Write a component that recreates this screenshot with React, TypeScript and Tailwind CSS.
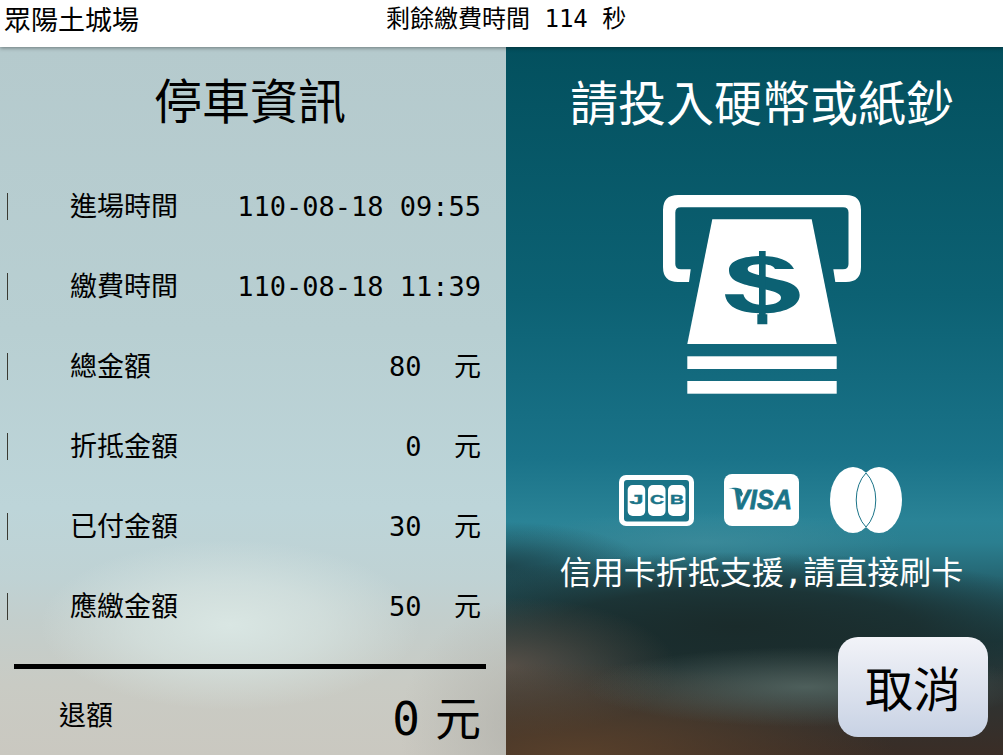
import React from "react";

const rows: [string, string][] = [
  ["進場時間", "110-08-18 09:55"],
  ["繳費時間", "110-08-18 11:39"],
  ["總金額", "80  元"],
  ["折抵金額", "0  元"],
  ["已付金額", "30  元"],
  ["應繳金額", "50  元"],
];

function PayIcon() {
  return (
    <svg width="200" height="200" viewBox="662 194 200 200" className="block">
      <path
        fill="#fff"
        fillRule="evenodd"
        d="M678 195H846Q861 195 861 210V267Q861 282 846 282H835.3L833.3 269.3H843Q848.5 269.3 848.5 264V212.5Q848.5 207.3 843 207.3H681Q675.3 207.3 675.3 212.5V264Q675.3 269.3 681 269.3H690.7L689 282H678Q663 282 663 267V210Q663 195 678 195Z"
      />
      <path fill="#fff" d="M712.3 219.3H811.7L836.7 344H687.3Z" />
      <rect x="687.3" y="356.3" width="149.4" height="12.7" fill="#fff" />
      <rect x="687.3" y="381" width="149.4" height="12.7" fill="#fff" />
      <g transform="translate(715 245) scale(0.3333)" fill="#0c6173">
        <path d="M237 72L180 72C175 62 160 58 140 58C115 58 98 62 98 72C98 82 115 86 140 92L190 104C230 112 254 125 254 150C254 185 205 205 145 205C80 205 35 190 30 148L85 148C90 170 115 180 145 180C175 180 198 172 198 158C198 146 180 140 155 134L110 124C70 114 42 105 42 75C42 47 85 33 140 33C185 33 225 45 237 72Z" />
        <path d="M132 18H152V208H157V238H127V208H132Z" />
      </g>
    </svg>
  );
}

function JcbLogo() {
  return (
    <svg width="75" height="51" viewBox="0 0 75 51" className="block">
      <rect x="0" y="0" width="75" height="51" rx="7" fill="#fff" />
      <rect x="5" y="5" width="65" height="41.500" rx="3" fill="#1b7488" />
      <rect x="8.700" y="10" width="17.500" height="31" rx="5" fill="#fff" />
      <rect x="29" y="10" width="17.500" height="31" rx="5" fill="#fff" />
      <rect x="49" y="10" width="17.500" height="31" rx="5" fill="#fff" />
      <g fill="#1b7488" stroke="#1b7488" strokeWidth="0.4" fontFamily="'Liberation Sans', sans-serif" fontWeight="700" fontSize="13">
        <text x="10.500" y="29" textLength="14" lengthAdjust="spacingAndGlyphs">J</text>
        <text x="31" y="29" textLength="14" lengthAdjust="spacingAndGlyphs">C</text>
        <text x="51" y="29" textLength="14" lengthAdjust="spacingAndGlyphs">B</text>
      </g>
    </svg>
  );
}

function VisaLogo() {
  return (
    <svg width="75" height="52" viewBox="0 0 75 52" className="block">
      <rect x="0" y="0" width="75" height="52" rx="8" fill="#fff" />
      <text
        x="9"
        y="34.700"
        fill="#1b7488"
        stroke="#1b7488"
        strokeWidth="0.8"
        fontFamily="'Liberation Sans', sans-serif"
        fontWeight="700"
        fontStyle="italic"
        fontSize="28"
        textLength="59"
        lengthAdjust="spacingAndGlyphs"
      >
        VISA
      </text>
      <path fill="#1b7488" d="M4.500 14.500C9 14 14 16 17 23L19 20L17 15C13 13.500 8 13.500 4.500 14.500Z" />
    </svg>
  );
}

function CardCircles() {
  return (
    <svg width="72" height="66" viewBox="830 467 72 66" className="block">
      <ellipse cx="853" cy="500" rx="23" ry="33" fill="#fff" />
      <ellipse cx="879" cy="500" rx="23" ry="33" fill="#fff" />
      <path
        fill="none"
        stroke="#1b7488"
        strokeWidth="1"
        d="M866 473A23 33 0 0 0 866 527A23 33 0 0 0 866 473Z"
      />
    </svg>
  );
}

export default function App() {
  return (
    <div className="w-[1003px] h-[755px] overflow-hidden flex flex-col font-['DejaVu_Sans_Mono','Noto_Sans_CJK_TC',monospace] text-black">
      <header className="h-[47px] shrink-0 bg-white relative z-10 flex items-center shadow-[0_1px_4px_rgba(0,0,0,0.4)]">
        <div className="w-[386px] pl-[4px] text-[27px] leading-[42px] mb-[5px]">眾陽土城場</div>
        <div className="text-[24px] leading-[38px] mb-[9px] whitespace-pre">剩餘繳費時間 114 秒</div>
      </header>
      <main className="flex flex-1 min-h-0">
        <section className="w-[506px] shrink-0 flex flex-col bg-[radial-gradient(ellipse_130px_130px_at_530px_680px,rgba(176,176,170,0.8)_0%,rgba(176,176,170,0)_100%),radial-gradient(ellipse_190px_85px_at_230px_578px,#d9e6e3_0%,rgba(217,230,227,0.6)_50%,rgba(217,230,227,0)_100%),linear-gradient(180deg,#b5cacd_0%,#b8cfd2_40%,#bdd5d9_65%,#bfd2d4_75%,#c3cecc_81%,#c9cbc4_90%,#cac8c0_100%)]">
          <h1 className="h-[119px] pb-[10px] pr-[6px] flex items-center justify-center text-[48px] font-normal">停車資訊</h1>
          <ul className="h-[480px]">
            {rows.map(([label, value]) => (
              <li key={label} className="h-[80px] flex items-center pl-[7px] pr-[25px] text-[27px] leading-[40px]">
                <span className="w-px h-[27px] bg-[#3a3a32]" />
                <span className="ml-[62px] mt-[2px]">{label}</span>
                <span className="ml-auto mt-[2px] whitespace-pre">{value}</span>
              </li>
            ))}
          </ul>
          <div className="mt-[18px] ml-[14px] mr-[20px] h-[5px] bg-black" />
          <div className="flex-1 flex items-center pl-[59px] pr-[25px]">
            <span className="text-[27px] leading-[40px] mt-[7px]">退額</span>
            <span className="ml-auto flex items-center text-[46px] leading-[60px] mt-[14px]">
              <span className="mr-[15px]">0</span>
              <span>元</span>
            </span>
          </div>
        </section>
        <section className="flex-1 flex flex-col items-center pl-[15px] text-white bg-[radial-gradient(ellipse_220px_40px_at_300px_640px,rgba(82,100,96,0.9)_0%,rgba(82,100,96,0)_100%),radial-gradient(ellipse_320px_95px_at_70px_710px,rgba(90,65,43,0.95)_0%,rgba(90,65,43,0)_100%),radial-gradient(ellipse_170px_70px_at_0px_620px,rgba(92,82,73,0.9)_0%,rgba(92,82,73,0)_100%),radial-gradient(ellipse_360px_75px_at_230px_580px,#1a2b2b_0%,rgba(26,43,43,0.8)_50%,rgba(26,43,43,0)_100%),radial-gradient(ellipse_140px_45px_at_0px_520px,rgba(27,58,64,0.75)_0%,rgba(27,58,64,0)_100%),radial-gradient(ellipse_200px_30px_at_200px_495px,rgba(70,145,160,0.55)_0%,rgba(70,145,160,0)_100%),linear-gradient(180deg,#03505e_0%,#0c6173_35%,#1a7389_58%,#2a8396_67%,#2b7f90_70%,#24606c_76%,#1c3a3e_84%,#2c3434_90%,#3a2d26_100%)]">
          <h2 className="mt-[27px] text-[48px] leading-[60px] font-normal">請投入硬幣或紙鈔</h2>
          <div className="mt-[60px]"><PayIcon /></div>
          <div className="mt-[73px] h-[66px] flex items-center mr-[4px]">
            <JcbLogo />
            <div className="ml-[30px]"><VisaLogo /></div>
            <div className="ml-[31px]"><CardCircles /></div>
          </div>
          <p className="mt-[20px] mr-[1px] text-[32px] leading-[40px]">信用卡折抵支援,請直接刷卡</p>
          <button className="mt-[44px] self-end mr-[15px] w-[150px] h-[100px] pt-[6px] rounded-[20px] text-[48px] text-black bg-[linear-gradient(180deg,#f2f3f8_0%,#c8d2e4_100%)]">取消</button>
        </section>
      </main>
    </div>
  );
}
